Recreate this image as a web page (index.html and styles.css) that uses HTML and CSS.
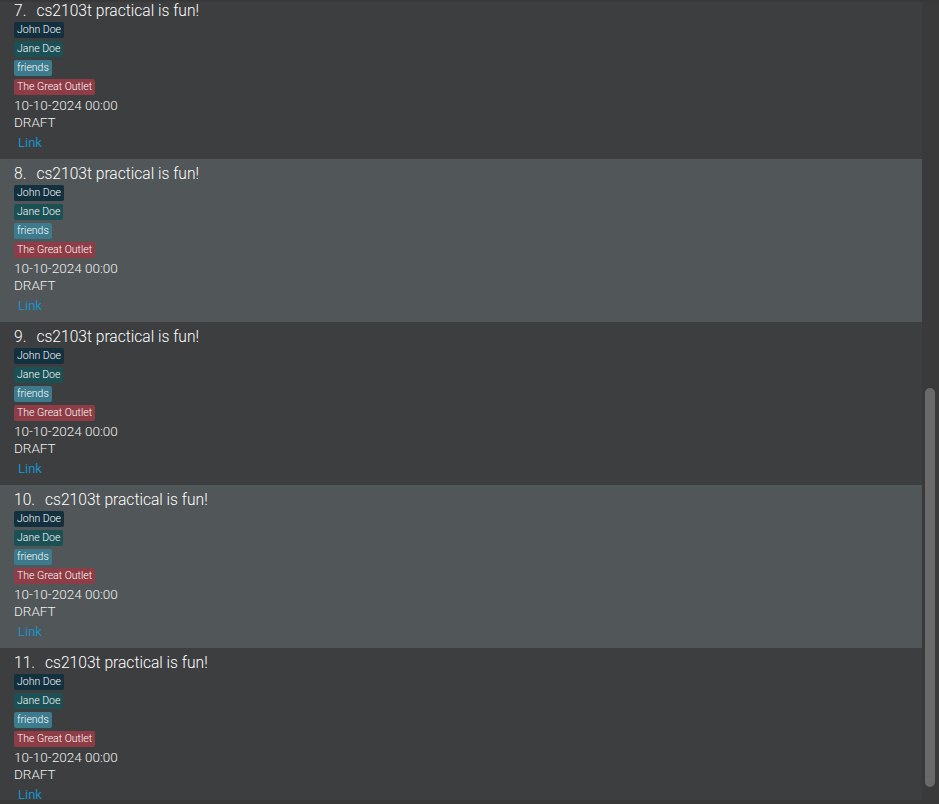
FILE: index.html
```html
<!DOCTYPE html>
<html>
<head>
<meta charset="utf-8">
<link rel="stylesheet" href="styles.css">
</head>
<body>
<div class="frame">
  <div class="viewport">
    <div class="list">
      <div class="card even">
        <div class="title"><span class="idx">7.</span>cs2103t practical is fun!</div>
        <div class="tags">
          <span class="tag t-john">John Doe</span>
          <span class="tag t-jane">Jane Doe</span>
          <span class="tag t-friends">friends</span>
          <span class="tag t-outlet">The Great Outlet</span>
        </div>
        <div class="meta">10-10-2024 00:00</div>
        <div class="meta">DRAFT</div>
        <div class="link">Link</div>
      </div>
      <div class="card odd">
        <div class="title"><span class="idx">8.</span>cs2103t practical is fun!</div>
        <div class="tags">
          <span class="tag t-john">John Doe</span>
          <span class="tag t-jane">Jane Doe</span>
          <span class="tag t-friends">friends</span>
          <span class="tag t-outlet">The Great Outlet</span>
        </div>
        <div class="meta">10-10-2024 00:00</div>
        <div class="meta">DRAFT</div>
        <div class="link">Link</div>
      </div>
      <div class="card even">
        <div class="title"><span class="idx">9.</span>cs2103t practical is fun!</div>
        <div class="tags">
          <span class="tag t-john">John Doe</span>
          <span class="tag t-jane">Jane Doe</span>
          <span class="tag t-friends">friends</span>
          <span class="tag t-outlet">The Great Outlet</span>
        </div>
        <div class="meta">10-10-2024 00:00</div>
        <div class="meta">DRAFT</div>
        <div class="link">Link</div>
      </div>
      <div class="card odd">
        <div class="title"><span class="idx">10.</span>cs2103t practical is fun!</div>
        <div class="tags">
          <span class="tag t-john">John Doe</span>
          <span class="tag t-jane">Jane Doe</span>
          <span class="tag t-friends">friends</span>
          <span class="tag t-outlet">The Great Outlet</span>
        </div>
        <div class="meta">10-10-2024 00:00</div>
        <div class="meta">DRAFT</div>
        <div class="link">Link</div>
      </div>
      <div class="card even">
        <div class="title"><span class="idx">11.</span>cs2103t practical is fun!</div>
        <div class="tags">
          <span class="tag t-john">John Doe</span>
          <span class="tag t-jane">Jane Doe</span>
          <span class="tag t-friends">friends</span>
          <span class="tag t-outlet">The Great Outlet</span>
        </div>
        <div class="meta">10-10-2024 00:00</div>
        <div class="meta">DRAFT</div>
        <div class="link">Link</div>
      </div>
    </div>
    <div class="scrollbar"><div class="thumb"></div></div>
  </div>
</div>
</body>
</html>
```

FILE: styles.css
```css
html, body {
  margin: 0;
  padding: 0;
  background: #383838;
}
body {
  font-family: Roboto, "Liberation Sans", sans-serif;
  color: #ffffff;
}
.frame {
  width: 939px;
  height: 804px;
  padding: 2px 0 4px 0;
  box-sizing: border-box;
}
.viewport {
  display: flex;
  height: 798px;
  overflow: hidden;
}
.list {
  width: 922px;
  margin-top: -6px;
  display: flex;
  flex-direction: column;
}
.card {
  height: 163px;
  flex: none;
  box-sizing: border-box;
  padding: 6px 0 0 14px;
  display: flex;
  flex-direction: column;
}
.even { background: #3c3e3f; }
.odd { background: #515658; }
.title {
  font-size: 15.6px;
  line-height: 19px;
  height: 19px;
  color: #ffffff;
  font-weight: 300;
}
.idx {
  margin-right: 10px;
}
.tags {
  display: flex;
  flex-direction: column;
  align-items: flex-start;
  gap: 3px;
  margin-top: 1px;
}
.tag {
  font-size: 10.5px;
  line-height: 16px;
  height: 16px;
  padding: 0 3px;
  border-radius: 2px;
  color: #ffffff;
  font-weight: 300;
}
.t-john { background: #12303e; }
.t-jane { background: #1b5055; }
.t-friends { background: #3c7a8d; }
.t-outlet { background: #8e3c45; }
.meta {
  font-size: 13.5px;
  line-height: 17px;
  color: #f0f0f0;
  font-weight: 300;
}
.tags + .meta { margin-top: 2px; }
.link {
  font-size: 13px;
  line-height: 17px;
  color: #1a90c8;
  margin-top: 3px;
  padding-left: 4px;
  font-weight: 400;
}
.scrollbar {
  width: 17px;
  flex: none;
  background: #3a3a3a;
  padding-top: 386px;
  box-sizing: border-box;
}
.thumb {
  width: 10px;
  height: 399px;
  margin-left: 3px;
  border-radius: 5px;
  background: #6a6a6a;
}
```
